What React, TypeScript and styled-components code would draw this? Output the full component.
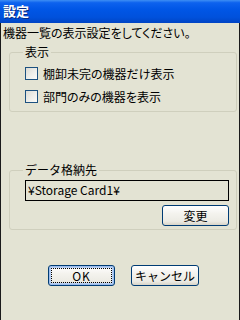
import styled, { createGlobalStyle } from "styled-components";

const GlobalStyle = createGlobalStyle`
  html, body {
    margin: 0;
    padding: 0;
    background: #e3e3d3;
  }
  * {
    box-sizing: border-box;
  }
`;

const App = () => {
  return (
    <>
      <GlobalStyle />
      <Window>
        <TitleBar>設定</TitleBar>
        <Body>
          <Intro>機器一覧の表示設定をしてください。</Intro>

          <GroupBox $top={5}>
            <Legend>表示</Legend>
            <CheckList>
              <CheckRow>
                <CheckBox />
                <CheckLabel>棚卸未完の機器だけ表示</CheckLabel>
              </CheckRow>
              <CheckRow>
                <CheckBox />
                <CheckLabel>部門のみの機器を表示</CheckLabel>
              </CheckRow>
            </CheckList>
          </GroupBox>

          <GroupBox $top={51}>
            <Legend>データ格納先</Legend>
            <PathBox>¥Storage Card1¥</PathBox>
            <ButtonLine>
              <PushButton $width={67}>変更</PushButton>
            </ButtonLine>
          </GroupBox>

          <DialogButtons>
            <PushButton $width={67} $default>
              OK
            </PushButton>
            <PushButton $width={68}>キャンセル</PushButton>
          </DialogButtons>
        </Body>
      </Window>
    </>
  );
};

const Window = styled.div`
  width: 240px;
  height: 320px;
  display: flex;
  flex-direction: column;
  background: #e3e3d3;
  font-family: "Noto Sans CJK JP", "Liberation Sans", sans-serif;
  font-size: 12px;
  line-height: 14px;
  color: #000;
  overflow: hidden;
`;

const TitleBar = styled.div`
  height: 23px;
  flex: none;
  display: flex;
  align-items: center;
  padding: 0 0 1px 3px;
  background: linear-gradient(
    to bottom,
    #3d8ef4 0%,
    #0d62ee 12%,
    #0056e6 40%,
    #0051dc 75%,
    #0044c4 100%
  );
  color: #fff;
  font-size: 13px;
  font-weight: bold;
  text-shadow: 1px 1px 0 #0a2a80;
`;

const Body = styled.div`
  flex: 1;
  display: flex;
  flex-direction: column;
  padding: 3px 0 0 2px;
  border-left: 1px solid #1a1a1a;
  border-right: 1px solid #1a1a1a;
`;

const Intro = styled.div`
  font-feature-settings: "palt";
  white-space: nowrap;
`;

const GroupBox = styled.fieldset<{ $top: number }>`
  margin: ${({ $top }) => $top}px 2px 0 6px;
  padding: 0 7px 0 15px;
  min-width: 0;
  border: 1px solid #cfcfbd;
  border-radius: 3px;
`;

const Legend = styled.legend`
  padding: 0 2px;
  margin-left: -2px;
  line-height: 14px;
`;

const CheckList = styled.div`
  display: flex;
  flex-direction: column;
  gap: 10px;
  padding: 8px 0 8px;
`;

const CheckRow = styled.label`
  display: flex;
  align-items: center;
  gap: 5px;
  height: 13px;
`;

const CheckBox = styled.span`
  width: 13px;
  height: 13px;
  flex: none;
  border: 1px solid #1c5180;
  background: linear-gradient(135deg, #dcdcd5 0%, #eeeeea 55%, #fbfbf9 100%);
`;

const CheckLabel = styled.span`
  font-feature-settings: "palt";
  white-space: nowrap;
  padding-top: 1px;
`;

const PathBox = styled.div`
  margin-top: 3px;
  height: 21px;
  display: flex;
  align-items: center;
  padding: 0 2px 1px;
  border: 1px solid #000;
  background: #e3e3d3;
`;

const ButtonLine = styled.div`
  display: flex;
  justify-content: flex-end;
  padding: 4px 0 3px;
`;

const PushButton = styled.button<{ $width: number; $default?: boolean }>`
  position: relative;
  width: ${({ $width }) => $width}px;
  height: 21px;
  padding: 0;
  font: inherit;
  color: #000;
  border: 1px solid #003c74;
  border-radius: 3px;
  background: linear-gradient(
    to bottom,
    #ffffff 0%,
    #f4f3ee 40%,
    #ecebe4 80%,
    #d8d4c8 100%
  );
  box-shadow: ${({ $default }) =>
    $default ? "inset 0 0 0 1px #9cbcec, inset 0 0 0 2px #b8d0f4" : "none"};
  letter-spacing: ${({ $default }) => ($default ? "1px" : "0")};

  &::after {
    content: "";
    display: ${({ $default }) => ($default ? "block" : "none")};
    position: absolute;
    inset: 2px;
    border: 1px dotted #000;
  }
`;

const DialogButtons = styled.div`
  display: flex;
  justify-content: center;
  gap: 16px;
  padding-left: 5px;
  margin-top: 35px;
`;

export default App;
